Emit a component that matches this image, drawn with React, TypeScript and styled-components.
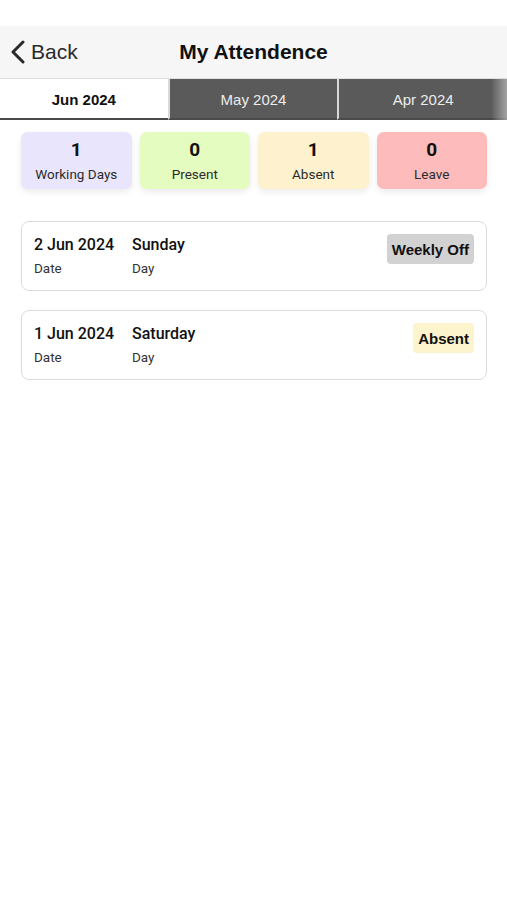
import React from 'react';
import styled, { createGlobalStyle } from 'styled-components';

const GlobalStyle = createGlobalStyle`
  body {
    margin: 0;
    background: #ffffff;
    font-family: 'Liberation Sans', Arial, sans-serif;
  }
`;

const Page = styled.div`
  width: 507px;
  min-height: 900px;
  padding-top: 26px;
  background: #ffffff;
`;

const Header = styled.header`
  display: flex;
  align-items: center;
  height: 52px;
  background: #f6f6f6;
  border-bottom: 1px solid #dedede;
  position: relative;
`;

const BackButton = styled.button`
  display: flex;
  align-items: center;
  gap: 5px;
  padding: 0 0 0 10px;
  border: none;
  background: none;
  color: #2a2a2a;
  font-family: 'Liberation Sans', Arial, sans-serif;
  font-size: 21px;
`;

const Title = styled.h1`
  position: absolute;
  left: 0;
  right: 0;
  margin: 0;
  text-align: center;
  font-size: 21px;
  font-weight: 700;
  color: #111;
  pointer-events: none;
`;

const Tabs = styled.nav`
  display: flex;
  height: 41px;
  position: relative;
  &::after {
    content: '';
    position: absolute;
    top: 0;
    right: 0;
    width: 16px;
    height: 100%;
    background: linear-gradient(to right, rgba(255, 255, 255, 0), rgba(255, 255, 255, 0.45));
  }
`;

const Tab = styled.div<{ $active?: boolean }>`
  flex: 1;
  display: flex;
  align-items: center;
  justify-content: center;
  padding-top: 1px;
  font-size: 15px;
  font-weight: ${(p) => (p.$active ? 700 : 400)};
  color: ${(p) => (p.$active ? '#111' : '#ececec')};
  background: ${(p) => (p.$active ? '#ffffff' : '#5a5a5a')};
  border-bottom: 2px solid #4a4a4a;
  border-left: ${(p) => (p.$active ? 'none' : '2px solid #d8d8d8')};
`;

const Stats = styled.section`
  display: grid;
  grid-template-columns: repeat(4, 1fr);
  gap: 8px;
  padding: 12px 20px 0 21px;
`;

const StatCard = styled.div<{ $bg: string }>`
  display: flex;
  flex-direction: column;
  align-items: center;
  height: 57px;
  padding-top: 6px;
  box-sizing: border-box;
  background: ${(p) => p.$bg};
  border-radius: 7px;
  box-shadow: 0 3px 6px rgba(0, 0, 0, 0.08);
  font-family: Roboto, 'Noto Sans', sans-serif;
`;

const StatValue = styled.div`
  font-size: 19px;
  font-weight: 700;
  color: #111;
  line-height: 24px;
`;

const StatLabel = styled.div`
  font-size: 13.5px;
  color: #2b2b2b;
  margin-top: 4px;
`;

const List = styled.section`
  display: flex;
  flex-direction: column;
  gap: 19px;
  padding: 32px 20px 0 21px;
`;

const DayCard = styled.div`
  display: flex;
  align-items: flex-start;
  justify-content: space-between;
  height: 70px;
  box-sizing: border-box;
  padding: 13px 12px 0 12px;
  border: 1.5px solid #dcdcdc;
  border-radius: 8px;
  font-family: Roboto, 'Noto Sans', sans-serif;
`;

const Fields = styled.div`
  display: flex;
  gap: 12px;
`;

const Field = styled.div<{ $w: number }>`
  width: ${(p) => p.$w}px;
  display: flex;
  flex-direction: column;
  gap: 6px;
  white-space: nowrap;
`;

const FieldValue = styled.div`
  font-size: 16px;
  font-weight: 500;
  color: #111;
`;

const FieldLabel = styled.div`
  font-size: 13.5px;
  color: #333;
`;

const Badge = styled.div<{ $bg: string }>`
  margin-top: -1px;
  padding: 0 5px;
  height: 30px;
  display: flex;
  align-items: center;
  background: ${(p) => p.$bg};
  border-radius: 4px;
  font-family: 'Liberation Sans', Arial, sans-serif;
  font-size: 15px;
  font-weight: 700;
  color: #111;
`;

const Chevron = () => (
  <svg width="16" height="24" viewBox="0 0 16 24" fill="none">
    <path d="M13 2 L3 12 L13 22" stroke="#2a2a2a" strokeWidth="3" strokeLinecap="round" strokeLinejoin="round" />
  </svg>
);

const stats = [
  { value: 1, label: 'Working Days', bg: '#e9e5fd' },
  { value: 0, label: 'Present', bg: '#e5fcc0' },
  { value: 1, label: 'Absent', bg: '#fdf2cd' },
  { value: 0, label: 'Leave', bg: '#fdbcbb' },
];

const days = [
  { date: '2 Jun 2024', day: 'Sunday', status: 'Weekly Off', bg: '#d2d2d2' },
  { date: '1 Jun 2024', day: 'Saturday', status: 'Absent', bg: '#fdf3cc' },
];

const App = () => {
  return (
    <Page>
      <GlobalStyle />
      <Header>
        <BackButton>
          <Chevron />
          Back
        </BackButton>
        <Title>My Attendence</Title>
      </Header>
      <Tabs>
        <Tab $active>Jun 2024</Tab>
        <Tab>May 2024</Tab>
        <Tab>Apr 2024</Tab>
      </Tabs>
      <Stats>
        {stats.map((s) => (
          <StatCard key={s.label} $bg={s.bg}>
            <StatValue>{s.value}</StatValue>
            <StatLabel>{s.label}</StatLabel>
          </StatCard>
        ))}
      </Stats>
      <List>
        {days.map((d) => (
          <DayCard key={d.date}>
            <Fields>
              <Field $w={86}>
                <FieldValue>{d.date}</FieldValue>
                <FieldLabel>Date</FieldLabel>
              </Field>
              <Field $w={86}>
                <FieldValue>{d.day}</FieldValue>
                <FieldLabel>Day</FieldLabel>
              </Field>
            </Fields>
            <Badge $bg={d.bg}>{d.status}</Badge>
          </DayCard>
        ))}
      </List>
    </Page>
  );
};

export default App;
